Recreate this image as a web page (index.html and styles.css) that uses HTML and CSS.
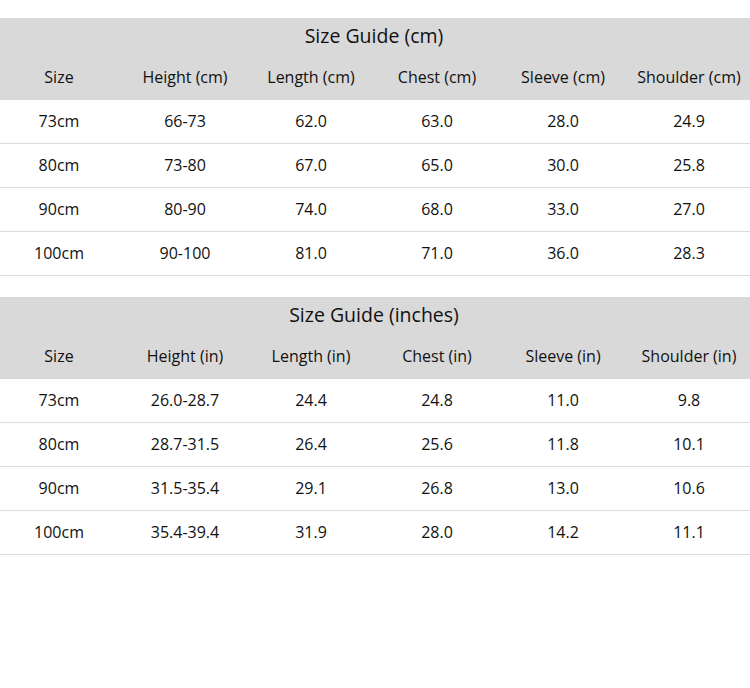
FILE: index.html
```html
<!DOCTYPE html>
<html lang="en">
<head>
<meta charset="utf-8">
<title>Size Guide</title>
<link rel="stylesheet" href="styles.css">
</head>
<body>
<main class="page">
  <section class="guide">
    <div class="guide-head">
      <div class="guide-title">Size Guide (cm)</div>
      <div class="row head-row">
        <div>Size</div><div>Height (cm)</div><div>Length (cm)</div><div>Chest (cm)</div><div>Sleeve (cm)</div><div>Shoulder (cm)</div>
      </div>
    </div>
    <div class="row"><div>73cm</div><div>66-73</div><div>62.0</div><div>63.0</div><div>28.0</div><div>24.9</div></div>
    <div class="row"><div>80cm</div><div>73-80</div><div>67.0</div><div>65.0</div><div>30.0</div><div>25.8</div></div>
    <div class="row"><div>90cm</div><div>80-90</div><div>74.0</div><div>68.0</div><div>33.0</div><div>27.0</div></div>
    <div class="row"><div>100cm</div><div>90-100</div><div>81.0</div><div>71.0</div><div>36.0</div><div>28.3</div></div>
  </section>
  <section class="guide">
    <div class="guide-head">
      <div class="guide-title">Size Guide (inches)</div>
      <div class="row head-row">
        <div>Size</div><div>Height (in)</div><div>Length (in)</div><div>Chest (in)</div><div>Sleeve (in)</div><div>Shoulder (in)</div>
      </div>
    </div>
    <div class="row"><div>73cm</div><div>26.0-28.7</div><div>24.4</div><div>24.8</div><div>11.0</div><div>9.8</div></div>
    <div class="row"><div>80cm</div><div>28.7-31.5</div><div>26.4</div><div>25.6</div><div>11.8</div><div>10.1</div></div>
    <div class="row"><div>90cm</div><div>31.5-35.4</div><div>29.1</div><div>26.8</div><div>13.0</div><div>10.6</div></div>
    <div class="row"><div>100cm</div><div>35.4-39.4</div><div>31.9</div><div>28.0</div><div>14.2</div><div>11.1</div></div>
  </section>
</main>
</body>
</html>
```

FILE: styles.css
```css
html, body {
  margin: 0;
  padding: 0;
  overflow: hidden;
  background: #ffffff;
}

body {
  font-family: "Open Sans", "Noto Sans", sans-serif;
  color: #111111;
}

.page {
  display: flex;
  flex-direction: column;
  gap: 21px;
  padding-top: 18px;
  width: 756px;
  margin-left: -4px;
}

.guide {
  display: flex;
  flex-direction: column;
}

.guide-head {
  background: #d9d9d9;
  height: 82px;
  display: flex;
  flex-direction: column;
}

.guide-title {
  height: 38px;
  display: flex;
  align-items: center;
  justify-content: center;
  font-size: 19.5px;
  line-height: 1;
  padding-bottom: 2px;
  box-sizing: border-box;
}

.row {
  display: grid;
  grid-template-columns: repeat(6, 126px);
  height: 44px;
  box-sizing: border-box;
  border-bottom: 1px solid #dcdcdc;
  font-size: 16px;
}

.row > div {
  display: flex;
  align-items: center;
  justify-content: center;
  white-space: nowrap;
  line-height: 1;
  padding-bottom: 2px;
}

.head-row {
  border-bottom: none;
}
```
